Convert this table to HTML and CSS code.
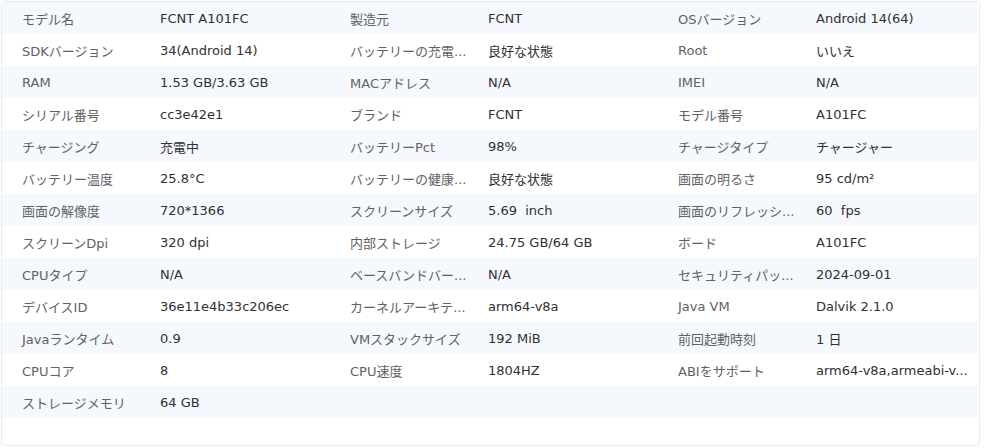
FILE: index.html
```html
<!DOCTYPE html>
<html lang="ja">
<head>
<meta charset="utf-8">
<link rel="stylesheet" href="styles.css">
</head>
<body>
<div class="card">
  <div class="row stripe"><span class="k">モデル名</span><span class="v">FCNT A101FC</span><span class="k">製造元</span><span class="v">FCNT</span><span class="k">OSバージョン</span><span class="v">Android 14(64)</span></div>
  <div class="row"><span class="k">SDKバージョン</span><span class="v">34(Android 14)</span><span class="k">バッテリーの充電...</span><span class="v">良好な状態</span><span class="k">Root</span><span class="v">いいえ</span></div>
  <div class="row stripe"><span class="k">RAM</span><span class="v">1.53 GB/3.63 GB</span><span class="k">MACアドレス</span><span class="v">N/A</span><span class="k">IMEI</span><span class="v">N/A</span></div>
  <div class="row"><span class="k">シリアル番号</span><span class="v">cc3e42e1</span><span class="k">ブランド</span><span class="v">FCNT</span><span class="k">モデル番号</span><span class="v">A101FC</span></div>
  <div class="row stripe"><span class="k">チャージング</span><span class="v">充電中</span><span class="k">バッテリーPct</span><span class="v">98%</span><span class="k">チャージタイプ</span><span class="v">チャージャー</span></div>
  <div class="row"><span class="k">バッテリー温度</span><span class="v">25.8°C</span><span class="k">バッテリーの健康...</span><span class="v">良好な状態</span><span class="k">画面の明るさ</span><span class="v">95 cd/m²</span></div>
  <div class="row stripe"><span class="k">画面の解像度</span><span class="v">720*1366</span><span class="k">スクリーンサイズ</span><span class="v">5.69&nbsp; inch</span><span class="k">画面のリフレッシ...</span><span class="v">60&nbsp; fps</span></div>
  <div class="row"><span class="k">スクリーンDpi</span><span class="v">320 dpi</span><span class="k">内部ストレージ</span><span class="v">24.75 GB/64 GB</span><span class="k">ボード</span><span class="v">A101FC</span></div>
  <div class="row stripe"><span class="k">CPUタイプ</span><span class="v">N/A</span><span class="k">ベースバンドバー...</span><span class="v">N/A</span><span class="k">セキュリティパッ...</span><span class="v">2024-09-01</span></div>
  <div class="row"><span class="k">デバイスID</span><span class="v">36e11e4b33c206ec</span><span class="k">カーネルアーキテ...</span><span class="v">arm64-v8a</span><span class="k">Java VM</span><span class="v">Dalvik 2.1.0</span></div>
  <div class="row stripe"><span class="k">Javaランタイム</span><span class="v">0.9</span><span class="k">VMスタックサイズ</span><span class="v">192 MiB</span><span class="k">前回起動時刻</span><span class="v">1 日</span></div>
  <div class="row"><span class="k">CPUコア</span><span class="v">8</span><span class="k">CPU速度</span><span class="v">1804HZ</span><span class="k">ABIをサポート</span><span class="v">arm64-v8a,armeabi-v...</span></div>
  <div class="row stripe"><span class="k">ストレージメモリ</span><span class="v">64 GB</span><span class="k"></span><span class="v"></span><span class="k"></span><span class="v"></span></div>
</div>
</body>
</html>
```

FILE: styles.css
```css
html, body {
  margin: 0;
  background: #ffffff;
}
body {
  font-family: "DejaVu Sans", "Noto Sans CJK JP", sans-serif;
  font-size: 13px;
}
.card {
  box-sizing: border-box;
  width: 979px;
  height: 445px;
  margin: 1px 0 0 1px;
  padding: 0 2px 0 0;
  border: 1px solid #e9edf2;
  border-radius: 4px;
  box-shadow: 0 0 2px rgba(0, 0, 0, 0.05);
}
.row {
  display: grid;
  grid-template-columns: 138px 190px 138px 190px 138px 1fr;
  height: 32px;
  align-items: center;
  padding-left: 8px;
}
.stripe {
  background: #f5f8fc;
}
.k, .v {
  padding: 0 12px;
  white-space: nowrap;
  overflow: hidden;
}
.k {
  color: #606266;
}
.v {
  color: #303133;
}
```
